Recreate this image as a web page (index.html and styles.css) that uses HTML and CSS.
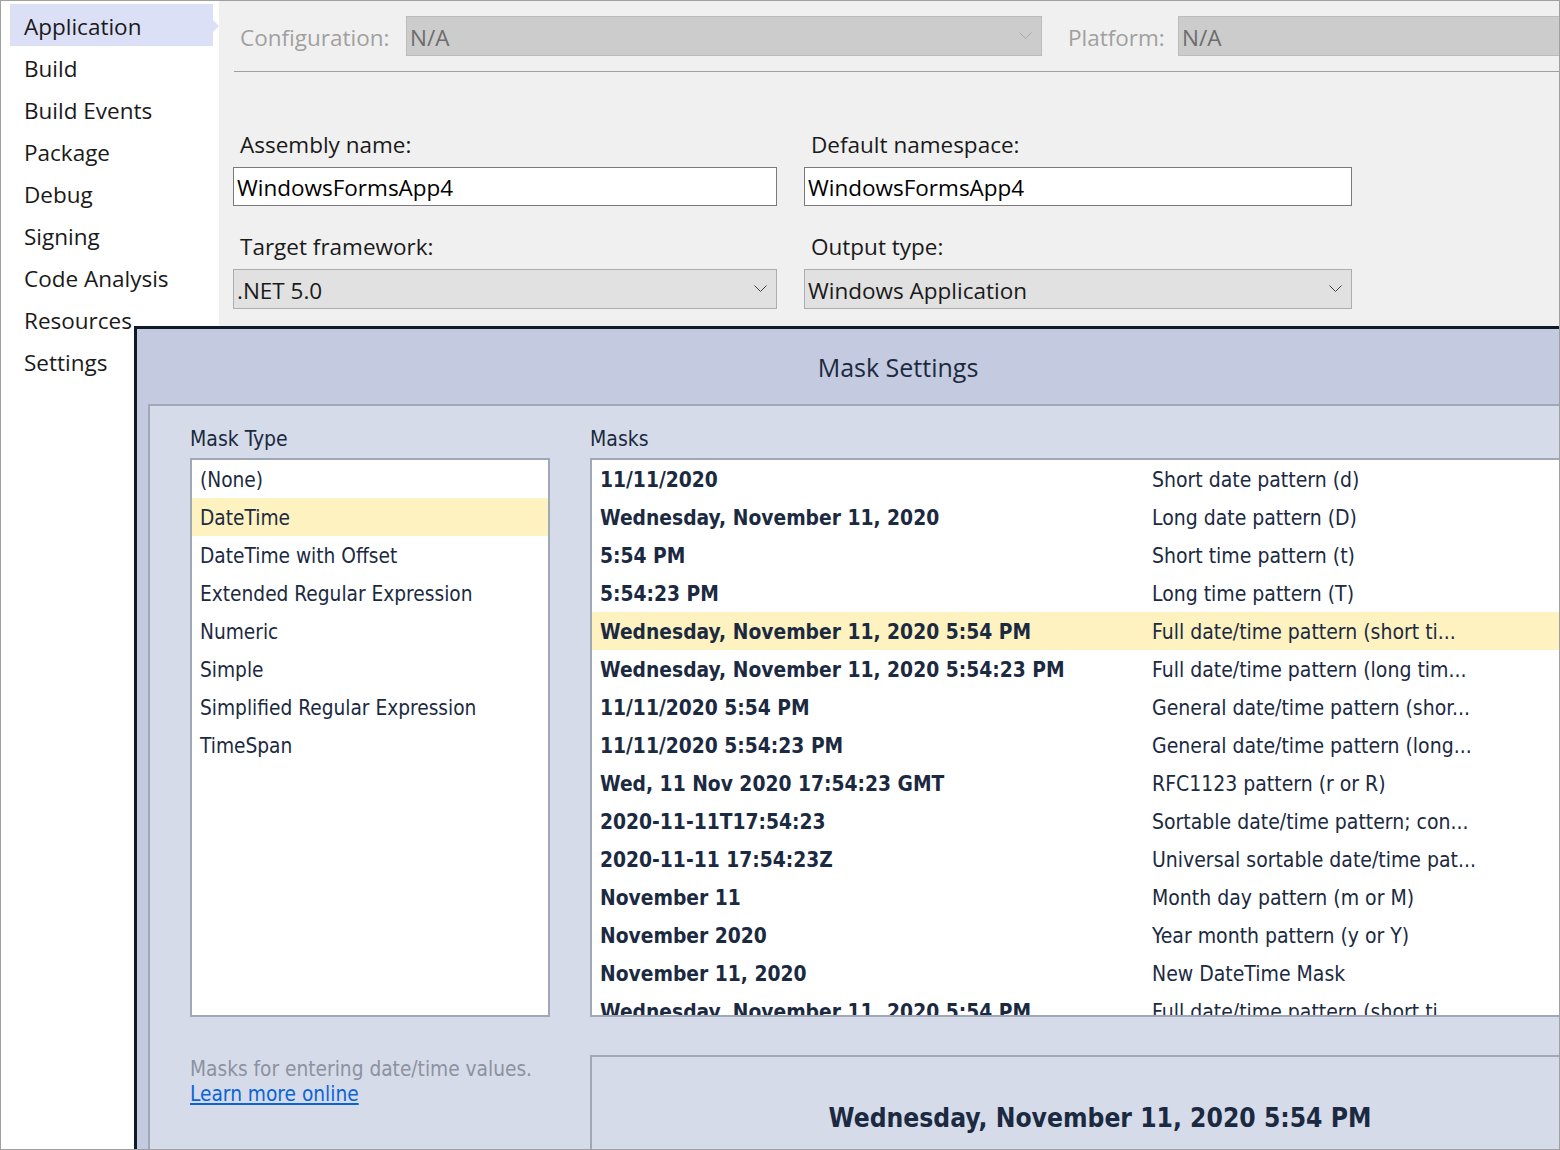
FILE: index.html
```html
<!DOCTYPE html>
<html>
<head>
<meta charset="utf-8">
<link rel="stylesheet" href="styles.css">
</head>
<body>
<div class="frame">
  <nav class="sidebar">
    <div class="nav-item active">Application</div>
    <div class="nav-item">Build</div>
    <div class="nav-item">Build Events</div>
    <div class="nav-item">Package</div>
    <div class="nav-item">Debug</div>
    <div class="nav-item">Signing</div>
    <div class="nav-item">Code Analysis</div>
    <div class="nav-item">Resources</div>
    <div class="nav-item">Settings</div>
  </nav>
  <main class="main">
    <div class="config-bar">
      <span class="cfg-label cfg-label-conf">Configuration:</span>
      <div class="combo combo-disabled combo-conf">
        <span>N/A</span>
        <svg class="chev" width="13" height="8" viewBox="0 0 13 8"><polyline points="0.5,0.5 6.5,6.5 12.5,0.5" fill="none" stroke="#a8a8a8" stroke-width="1"/></svg>
      </div>
      <span class="cfg-label cfg-label-plat">Platform:</span>
      <div class="combo combo-disabled combo-plat"><span>N/A</span></div>
    </div>
    <div class="form-grid">
      <div class="field">
        <div class="field-label">Assembly name:</div>
        <div class="textbox">WindowsFormsApp4</div>
      </div>
      <div class="field">
        <div class="field-label">Default namespace:</div>
        <div class="textbox">WindowsFormsApp4</div>
      </div>
      <div class="field">
        <div class="field-label">Target framework:</div>
        <div class="combo combo-enabled">
          <span>.NET 5.0</span>
          <svg class="chev" width="13" height="8" viewBox="0 0 13 8"><polyline points="0.5,0.5 6.5,6.5 12.5,0.5" fill="none" stroke="#404040" stroke-width="1"/></svg>
        </div>
      </div>
      <div class="field">
        <div class="field-label">Output type:</div>
        <div class="combo combo-enabled">
          <span>Windows Application</span>
          <svg class="chev" width="13" height="8" viewBox="0 0 13 8"><polyline points="0.5,0.5 6.5,6.5 12.5,0.5" fill="none" stroke="#404040" stroke-width="1"/></svg>
        </div>
      </div>
    </div>
  </main>

  <div class="dialog">
    <div class="dialog-title">Mask Settings</div>
    <div class="panel">
      <div class="panel-grid">
        <div class="list-label">Mask Type</div>
        <div class="list-label">Masks</div>
        <div class="listbox types">
          <div class="type-row">(None)</div>
          <div class="type-row selected">DateTime</div>
          <div class="type-row">DateTime with Offset</div>
          <div class="type-row">Extended Regular Expression</div>
          <div class="type-row">Numeric</div>
          <div class="type-row">Simple</div>
          <div class="type-row">Simplified Regular Expression</div>
          <div class="type-row">TimeSpan</div>
        </div>
        <div class="listbox masks">
          <div class="mask-row"><span class="mask-val">11/11/2020</span><span class="mask-desc">Short date pattern (d)</span></div>
          <div class="mask-row"><span class="mask-val">Wednesday, November 11, 2020</span><span class="mask-desc">Long date pattern (D)</span></div>
          <div class="mask-row"><span class="mask-val">5:54 PM</span><span class="mask-desc">Short time pattern (t)</span></div>
          <div class="mask-row"><span class="mask-val">5:54:23 PM</span><span class="mask-desc">Long time pattern (T)</span></div>
          <div class="mask-row selected"><span class="mask-val">Wednesday, November 11, 2020 5:54 PM</span><span class="mask-desc">Full date/time pattern (short ti...</span></div>
          <div class="mask-row"><span class="mask-val">Wednesday, November 11, 2020 5:54:23 PM</span><span class="mask-desc">Full date/time pattern (long tim...</span></div>
          <div class="mask-row"><span class="mask-val">11/11/2020 5:54 PM</span><span class="mask-desc">General date/time pattern (shor...</span></div>
          <div class="mask-row"><span class="mask-val">11/11/2020 5:54:23 PM</span><span class="mask-desc">General date/time pattern (long...</span></div>
          <div class="mask-row"><span class="mask-val">Wed, 11 Nov 2020 17:54:23 GMT</span><span class="mask-desc">RFC1123 pattern (r or R)</span></div>
          <div class="mask-row"><span class="mask-val">2020-11-11T17:54:23</span><span class="mask-desc">Sortable date/time pattern; con...</span></div>
          <div class="mask-row"><span class="mask-val">2020-11-11 17:54:23Z</span><span class="mask-desc">Universal sortable date/time pat...</span></div>
          <div class="mask-row"><span class="mask-val">November 11</span><span class="mask-desc">Month day pattern (m or M)</span></div>
          <div class="mask-row"><span class="mask-val">November 2020</span><span class="mask-desc">Year month pattern (y or Y)</span></div>
          <div class="mask-row"><span class="mask-val">November 11, 2020</span><span class="mask-desc">New DateTime Mask</span></div>
          <div class="mask-row"><span class="mask-val">Wednesday, November 11, 2020 5:54 PM</span><span class="mask-desc">Full date/time pattern (short ti...</span></div>
        </div>
        <div class="info">
          <div class="info-text">Masks for entering date/time values.</div>
          <a class="info-link" href="#">Learn more online</a>
        </div>
        <div class="preview">
          <div class="preview-text">Wednesday, November 11, 2020 5:54 PM</div>
        </div>
      </div>
    </div>
  </div>
</div>
</body>
</html>
```
FILE: styles.css
```css
* { box-sizing: border-box; }
html, body { margin: 0; padding: 0; background: #ffffff; }

.frame {
  position: relative;
  width: 1560px;
  height: 1150px;
  border: 1px solid #a0a0a0;
  display: flex;
  overflow: hidden;
  font-family: "Open Sans", "Noto Sans", sans-serif;
  color: #1a1a1a;
}

/* Sidebar */
.sidebar {
  width: 218px;
  flex: none;
  background: #ffffff;
  padding: 3px 0 0 9px;
}
.nav-item {
  position: relative;
  width: 203px;
  height: 42px;
  line-height: 46px;
  padding-left: 14px;
  font-size: 22.5px;
  color: #1a1a1a;
  white-space: nowrap;
}
.nav-item.active { background: #dce0f7; }
.nav-item.active::after {
  content: "";
  position: absolute;
  right: -6px;
  top: 16px;
  border-top: 6px solid transparent;
  border-bottom: 6px solid transparent;
  border-left: 6px solid #dce0f7;
}

/* Main */
.main {
  flex: 1;
  background: #f0f0f0;
  padding-left: 14px;
}
.config-bar {
  display: flex;
  align-items: flex-start;
  height: 71px;
  margin-left: 1px;
  padding: 15px 0 0 6px;
  border-bottom: 1px solid #a0a0a0;
}
.cfg-label {
  height: 40px;
  line-height: 44px;
  font-size: 22.5px;
  color: #a0a0a0;
  white-space: nowrap;
}
.cfg-label-conf { width: 166px; }
.cfg-label-plat { width: 110px; margin-left: 26px; }

.combo {
  position: relative;
  height: 40px;
  line-height: 42px;
  font-size: 22.5px;
  padding-left: 3px;
  border: 1px solid #b5b5b5;
  white-space: nowrap;
}
.combo-disabled { background: #cccccc; color: #6d6d6d; border-color: #bcbcbc; }
.combo-conf { width: 636px; }
.combo-plat { flex: 1; border-right: none; }
.combo-enabled { background: #e1e1e1; color: #1a1a1a; border-color: #adadad; }
.chev { position: absolute; right: 9px; top: 15px; }

.form-grid {
  display: grid;
  grid-template-columns: 544px 548px;
  column-gap: 27px;
  row-gap: 26px;
  padding-top: 58px;
}
.field-label {
  height: 30px;
  line-height: 30px;
  padding-left: 7px;
  margin-bottom: 7px;
  font-size: 22.5px;
  color: #1a1a1a;
}
.textbox {
  height: 39px;
  line-height: 39px;
  padding-left: 3px;
  background: #ffffff;
  border: 1px solid #7a7a7a;
  font-size: 22.5px;
  color: #000000;
}
.form-grid .combo { height: 40px; }

/* Dialog */
.dialog {
  position: absolute;
  left: 133px;
  top: 325px;
  width: 1528px;
  bottom: 0;
  background: #c4cadf;
  border-top: 3px solid #0f1b2a;
  border-left: 3px solid #0f1b2a;
  padding-left: 11px;
  display: flex;
  flex-direction: column;
  color: #1b2a41;
  font-family: "DejaVu Sans Condensed", "DejaVu Sans", sans-serif;
}
.dialog-title {
  height: 75px;
  line-height: 76px;
  text-align: center;
  font-family: "Open Sans", "Noto Sans", sans-serif;
  font-size: 25px;
  color: #1b2a41;
  padding-right: 14px;
}
.panel {
  flex: 1;
  background: #d5dbe8;
  border-top: 2px solid #a0a8b8;
  border-left: 2px solid #a0a8b8;
  padding: 17px 0 0 40px;
}
.panel-grid {
  display: grid;
  grid-template-columns: 360px 1018px;
  column-gap: 40px;
  grid-template-rows: 30px 559px auto;
  row-gap: 5px;
}
.list-label {
  line-height: 32px;
  font-size: 21px;
  color: #1b2a41;
}
.listbox {
  background: #ffffff;
  border: 2px solid #a0a8b8;
  overflow: hidden;
}
.type-row {
  height: 38px;
  line-height: 40px;
  padding-left: 8px;
  font-size: 20.7px;
  white-space: nowrap;
}
.selected { background: #fdf2c0; }
.mask-row {
  display: flex;
  height: 38px;
  line-height: 40px;
  font-size: 21px;
  white-space: nowrap;
}
.mask-val {
  width: 560px;
  padding-left: 8px;
  font-weight: bold;
  font-size: 20.8px;
  flex: none;
}
.mask-desc { flex: none; }

.info {
  margin-top: 35px;
  font-size: 20.7px;
  line-height: 25px;
}
.info-text { color: #8c92a0; }
.info-link { color: #0a64d6; text-decoration: underline; }

.preview {
  margin-top: 33px;
  height: 120px;
  border-top: 2px solid #a0a8b8;
  border-left: 2px solid #a0a8b8;
  padding-top: 44px;
  text-align: center;
}
.preview-text {
  font-size: 26.2px;
  font-weight: bold;
  line-height: 34px;
  color: #1b2a41;
}
```
